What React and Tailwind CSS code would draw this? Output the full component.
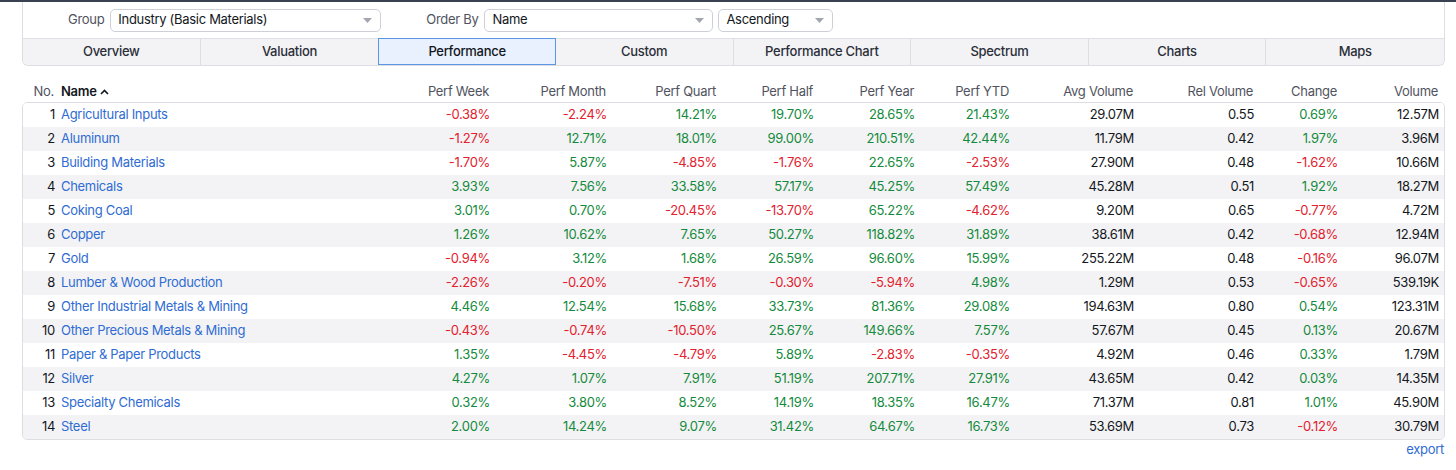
import React from 'react';

const rows = [
  ['Agricultural Inputs', '-0.38%', '-2.24%', '14.21%', '19.70%', '28.65%', '21.43%', '29.07M', '0.55', '0.69%', '12.57M'],
  ['Aluminum', '-1.27%', '12.71%', '18.01%', '99.00%', '210.51%', '42.44%', '11.79M', '0.42', '1.97%', '3.96M'],
  ['Building Materials', '-1.70%', '5.87%', '-4.85%', '-1.76%', '22.65%', '-2.53%', '27.90M', '0.48', '-1.62%', '10.66M'],
  ['Chemicals', '3.93%', '7.56%', '33.58%', '57.17%', '45.25%', '57.49%', '45.28M', '0.51', '1.92%', '18.27M'],
  ['Coking Coal', '3.01%', '0.70%', '-20.45%', '-13.70%', '65.22%', '-4.62%', '9.20M', '0.65', '-0.77%', '4.72M'],
  ['Copper', '1.26%', '10.62%', '7.65%', '50.27%', '118.82%', '31.89%', '38.61M', '0.42', '-0.68%', '12.94M'],
  ['Gold', '-0.94%', '3.12%', '1.68%', '26.59%', '96.60%', '15.99%', '255.22M', '0.48', '-0.16%', '96.07M'],
  ['Lumber & Wood Production', '-2.26%', '-0.20%', '-7.51%', '-0.30%', '-5.94%', '4.98%', '1.29M', '0.53', '-0.65%', '539.19K'],
  ['Other Industrial Metals & Mining', '4.46%', '12.54%', '15.68%', '33.73%', '81.36%', '29.08%', '194.63M', '0.80', '0.54%', '123.31M'],
  ['Other Precious Metals & Mining', '-0.43%', '-0.74%', '-10.50%', '25.67%', '149.66%', '7.57%', '57.67M', '0.45', '0.13%', '20.67M'],
  ['Paper & Paper Products', '1.35%', '-4.45%', '-4.79%', '5.89%', '-2.83%', '-0.35%', '4.92M', '0.46', '0.33%', '1.79M'],
  ['Silver', '4.27%', '1.07%', '7.91%', '51.19%', '207.71%', '27.91%', '43.65M', '0.42', '0.03%', '14.35M'],
  ['Specialty Chemicals', '0.32%', '3.80%', '8.52%', '14.19%', '18.35%', '16.47%', '71.37M', '0.81', '1.01%', '45.90M'],
  ['Steel', '2.00%', '14.24%', '9.07%', '31.42%', '64.67%', '16.73%', '53.69M', '0.73', '-0.12%', '30.79M'],
];

const tabs = ['Overview', 'Valuation', 'Performance', 'Custom', 'Performance Chart', 'Spectrum', 'Charts', 'Maps'];
const heads = ['Perf Week', 'Perf Month', 'Perf Quart', 'Perf Half', 'Perf Year', 'Perf YTD', 'Avg Volume', 'Rel Volume', 'Change', 'Volume'];
const colored = [0, 1, 2, 3, 4, 5, 8];

const grid = 'grid grid-cols-[32px_346px_89px_117px_110px_97px_101px_95px_124px_120px_84px_101px]';

function Select({ value, w }) {
  return (
    <div className={`${w} h-[23px] flex items-center justify-between rounded-[5px] border border-[#cdd0d8] bg-white pl-[7px] pr-[8px]`}>
      <span className="text-[13px] text-[#131722]">{value}</span>
      <svg width="9" height="5" viewBox="0 0 9 5"><path d="M0 0h9L4.5 5z" fill="#a3a6af" /></svg>
    </div>
  );
}

function pct(v) {
  return v.startsWith('-') ? 'text-[#e3202e]' : 'text-[#138a3c]';
}

export default function App() {
  return (
    <div className="w-[1456px] h-[470px] bg-white overflow-hidden tracking-[-0.3px]" style={{ fontFamily: 'Inter, "Liberation Sans", sans-serif' }}>
      <div className="h-[2px] bg-[#3b4150]" />
      <div className="ml-[22px] mr-[11px] border border-t-0 border-[#dcdee3] rounded-b-[6px] overflow-hidden">
        <div className="h-[36px] flex items-center pl-[45px]">
          <span className="text-[13px] text-[#50535e] mr-[6px]">Group</span>
          <Select value="Industry (Basic Materials)" w="w-[271px]" />
          <span className="text-[13px] text-[#50535e] ml-[45px] mr-[6px]">Order By</span>
          <Select value="Name" w="w-[229px]" />
          <div className="w-[5px]" />
          <Select value="Ascending" w="w-[115px]" />
        </div>
        <div className="h-[27px] grid grid-cols-8 border-t border-[#e0e1e6] bg-[#f3f3f5]">
          {tabs.map((t, i) => (
            <div
              key={t}
              className={
                t === 'Performance'
                  ? 'flex items-center justify-center text-[13px] font-medium text-[#131722] bg-[#e8f1fd] border border-[#5a95e6] -mt-px'
                  : `flex items-center justify-center text-[13px] font-medium text-[#2a2e39] ${i < 7 && i !== 1 ? 'border-r border-[#dcdee3]' : ''}`
              }
            >
              {t}
            </div>
          ))}
        </div>
      </div>

      <div className="ml-[22px] mr-[11px] mt-[14px]">
        <div className={`${grid} h-[22px] pt-[2px] items-center text-[13px] text-[#50535e]`}>
          <div className="text-right">No.</div>
          <div className="pl-[7px] font-semibold text-[#131722] flex items-center gap-[3px]">
            Name
            <svg width="9" height="6" viewBox="0 0 9 6"><path d="M1 5l3.5-3.5L8 5" stroke="#131722" strokeWidth="1.6" fill="none" /></svg>
          </div>
          {heads.map((h) => (
            <div key={h} className="text-right">{h}</div>
          ))}
        </div>
        <div className="border border-[#dcdee3] rounded-[5px] overflow-hidden">
          {rows.map((r, i) => (
            <div key={r[0]} className={`${grid} h-[24px] items-center text-[13px] ${i % 2 ? 'bg-[#f3f3f5]' : 'bg-white'}`}>
              <div className="text-right text-[#131722] -ml-px">{i + 1}</div>
              <div className="pl-[7px] text-[#2f6cd3] -ml-px">{r[0]}</div>
              {r.slice(1).map((v, j) => (
                <div key={j} className={`text-right -ml-px ${colored.includes(j) ? pct(v) : 'text-[#131722]'}`}>{v}</div>
              ))}
            </div>
          ))}
        </div>
        <div className="flex justify-end pr-px pt-[1px]">
          <span className="text-[13px] leading-[16px] text-[#2f6cd3]">export</span>
        </div>
      </div>
    </div>
  );
}
